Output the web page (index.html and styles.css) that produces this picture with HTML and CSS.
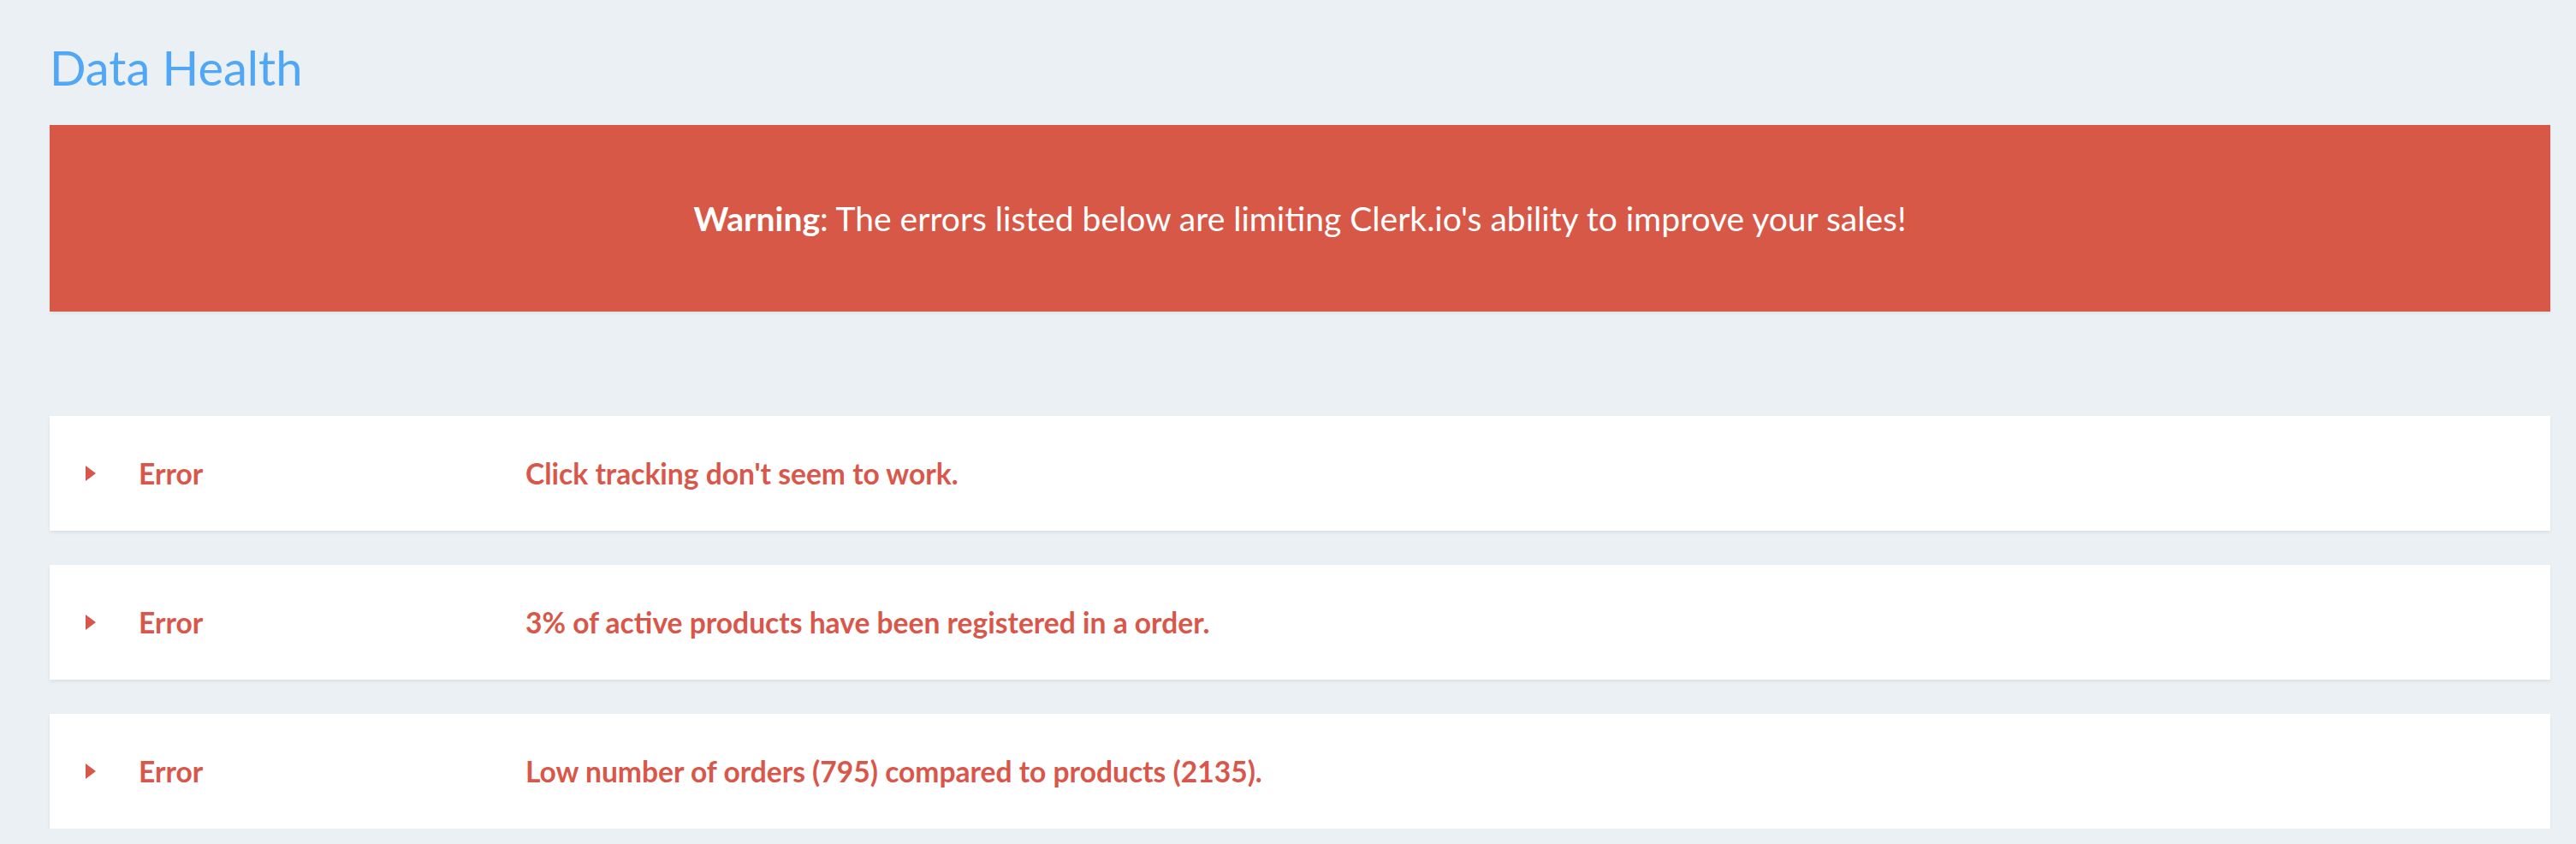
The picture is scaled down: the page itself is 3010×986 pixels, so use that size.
FILE: index.html
```html
<!DOCTYPE html>
<html>
<head>
<meta charset="utf-8">
<link rel="stylesheet" href="styles.css">
</head>
<body>
<div class="page">
  <h1 class="title">Data Health</h1>
  <div class="banner"><span><strong>Warning</strong>: The errors listed below are limiting Clerk.io's ability to improve your sales!</span></div>
  <div class="list">
    <div class="card">
      <span class="caret"></span>
      <span class="label">Error</span>
      <span class="msg">Click tracking don't seem to work.</span>
    </div>
    <div class="card">
      <span class="caret"></span>
      <span class="label">Error</span>
      <span class="msg">3% of active products have been registered in a order.</span>
    </div>
    <div class="card">
      <span class="caret"></span>
      <span class="label">Error</span>
      <span class="msg">Low number of orders (795) compared to products (2135).</span>
    </div>
  </div>
</div>
</body>
</html>
```
FILE: styles.css
```css
html, body {
  margin: 0;
  padding: 0;
  background: #ebf0f4;
  font-family: Lato, "Open Sans", sans-serif;
}
.page {
  padding: 0 30px 0 58px;
}
.title {
  margin: 0;
  padding: 45px 0 34px 0;
  font-size: 56px;
  font-weight: 400;
  line-height: 67px;
  color: #4fa7f6;
}
.banner {
  height: 218px;
  background: #d75846;
  color: #fff;
  display: flex;
  align-items: center;
  justify-content: center;
  font-size: 39px;
  box-shadow: 0 2px 4px rgba(0,0,0,0.06);
}
.banner strong {
  font-weight: 700;
}
.list {
  margin-top: 122px;
  display: flex;
  flex-direction: column;
  gap: 40px;
}
.card {
  height: 134px;
  background: #fff;
  box-shadow: 0 2px 4px rgba(0,0,0,0.07);
  display: flex;
  align-items: center;
  padding-left: 42px;
  color: #d9574a;
  font-weight: 700;
  font-size: 33.6px;
}
.caret {
  width: 0;
  height: 0;
  border-top: 9px solid transparent;
  border-bottom: 9px solid transparent;
  border-left: 12px solid #d9574a;
  margin-right: 50px;
}
.label {
  width: 452px;
}
```
